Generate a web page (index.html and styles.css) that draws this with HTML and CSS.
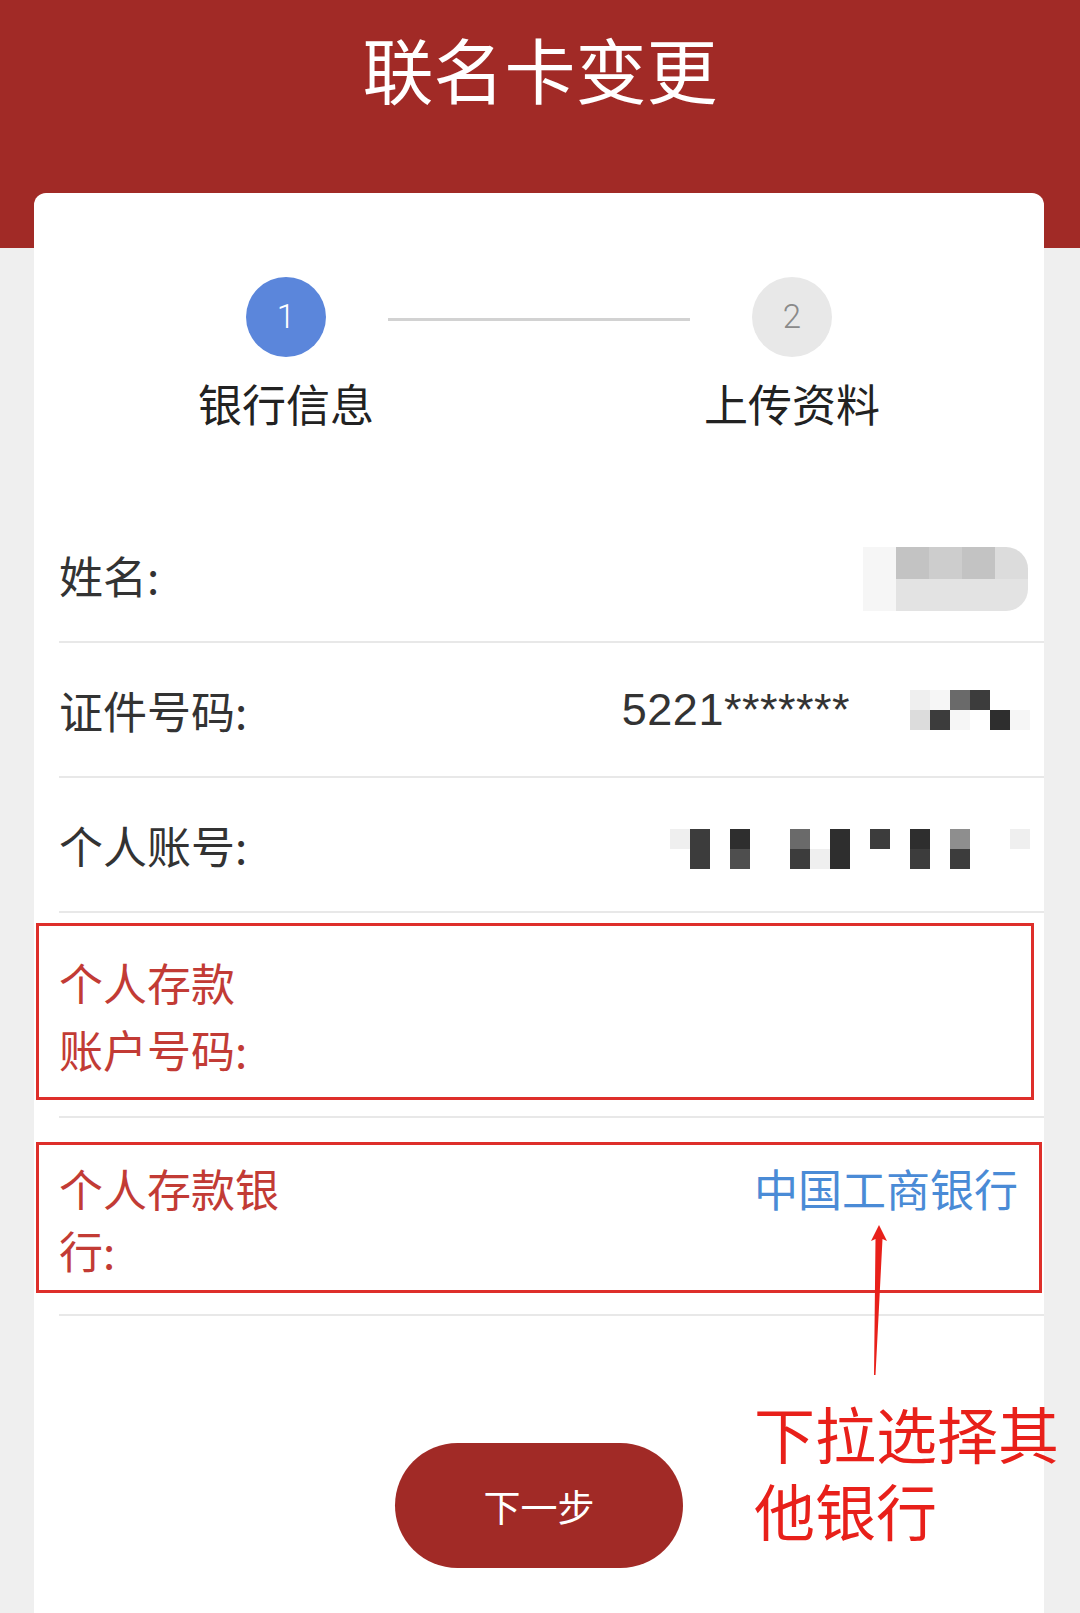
FILE: index.html
```html
<!DOCTYPE html>
<html lang="zh-CN">
<head>
    <meta charset="UTF-8">
    <meta name="viewport" content="width=device-width, initial-scale=1.0">
    <title>联名卡变更</title>
    <link rel="stylesheet" href="styles.css">
</head>
<body>
    <header class="topbar">
        <h1>联名卡变更</h1>
    </header>

    <main class="card">
        <div class="steps">
            <div class="step">
                <div class="step-dot active">1</div>
                <div class="step-name">银行信息</div>
            </div>
            <div class="step-line"></div>
            <div class="step">
                <div class="step-dot">2</div>
                <div class="step-name">上传资料</div>
            </div>
        </div>

        <div class="fields">
            <div class="field">
                <span class="field-label">姓名:</span>
                <div class="mosaic mosaic-name">
                    <i class="l6"></i><i class="l1"></i><i class="l2"></i><i class="l1"></i><i class="l3"></i>
                    <i class="l6"></i><i class="l4"></i><i class="l4"></i><i class="l4"></i><i class="l4"></i>
                </div>
            </div>

            <div class="field">
                <span class="field-label">证件号码:</span>
                <div class="field-value">
                    <span class="id-text">5221*******</span>
                    <div class="mosaic mosaic-id">
                        <i class="l5"></i><i class="l6"></i><i class="k4"></i><i class="k2"></i><i></i><i></i>
                        <i class="l3"></i><i class="k2"></i><i class="l6"></i><i></i><i class="k1"></i><i class="l6"></i>
                    </div>
                </div>
            </div>

            <div class="field">
                <span class="field-label">个人账号:</span>
                <div class="mosaic mosaic-acct">
                    <i class="l5"></i><i class="k2"></i><i></i><i class="k1"></i><i></i><i></i><i class="k4"></i><i></i><i class="k1"></i><i></i><i class="k2"></i><i></i><i class="k1"></i><i></i><i class="k5"></i><i></i><i></i><i class="l5"></i>
                    <i></i><i class="k2"></i><i></i><i class="k3"></i><i></i><i></i><i class="k2"></i><i class="l5"></i><i class="k1"></i><i></i><i></i><i></i><i class="k2"></i><i></i><i class="k2"></i><i></i><i></i><i></i>
                </div>
            </div>

            <div class="field field-tall field-deposit">
                <span class="field-label marked">个人存款<br>账户号码:</span>
                <div class="mark-box mark-deposit"></div>
            </div>

            <div class="field field-tall field-bank">
                <span class="field-label marked">个人存款银<br>行:</span>
                <span class="bank-value">中国工商银行</span>
                <div class="mark-box mark-bank"></div>
            </div>
        </div>

        <div class="actions">
            <button class="next-btn" type="button">下一步</button>
        </div>

        <svg class="note-arrow" width="30" height="160" viewBox="0 0 30 160">
            <polygon points="15,3 23,19 18.5,17 11.5,153 10,153 11.5,17 7,19" fill="#e8201a"/>
        </svg>
        <p class="note">下拉选择其<br>他银行</p>
    </main>
</body>
</html>
```

FILE: styles.css
```css
html, body {
    margin: 0;
    padding: 0;
    background-color: #efefef;
    font-family: "Liberation Sans", "Noto Sans CJK SC", sans-serif;
    color: #333333;
}

.topbar {
    height: 248px;
    background-color: #a12a26;
    padding-top: 17px;
    box-sizing: border-box;
}

.topbar h1 {
    margin: 0;
    font-size: 71px;
    font-weight: 400;
    line-height: 100px;
    color: #ffffff;
    text-align: center;
    font-family: "Noto Sans CJK SC", sans-serif;
}

.card {
    position: relative;
    margin: -55px 36px 0 34px;
    min-height: 1420px;
    background-color: #ffffff;
    border-radius: 12px 12px 0 0;
}

/* steps */

.steps {
    display: flex;
    height: 315px;
    padding: 84px 152px 0;
    box-sizing: border-box;
}

.step {
    width: 200px;
    display: flex;
    flex-direction: column;
    align-items: center;
}

.step-dot {
    width: 80px;
    height: 80px;
    border-radius: 50%;
    background-color: #e8e8e8;
    color: #8a8a8a;
    font-family: Roboto, "Liberation Sans", sans-serif;
    font-weight: 300;
    font-size: 33px;
    line-height: 80px;
    text-align: center;
}

.step-dot.active {
    background-color: #5b86db;
    color: #ffffff;
}

.step-name {
    margin-top: 18px;
    font-size: 44px;
    line-height: 57px;
    color: #222222;
    font-family: "Noto Sans CJK SC", sans-serif;
}

.step-line {
    flex: 1;
    height: 3px;
    margin: 41px 2px 0;
    background-color: #d2d2d2;
}

/* form rows */

.field {
    position: relative;
    display: flex;
    align-items: center;
    justify-content: space-between;
    height: 135px;
    margin-left: 25px;
    padding-right: 14px;
    border-bottom: 2px solid #e8e8e8;
    box-sizing: border-box;
}

.field-label {
    font-size: 44px;
    color: #333333;
    font-family: "Noto Sans CJK SC", sans-serif;
}

.field-tall {
    height: auto;
    align-items: flex-start;
}

.field-deposit {
    padding-top: 36px;
    padding-bottom: 33px;
}

.field-deposit .field-label {
    line-height: 67px;
}

.field-bank {
    padding-top: 39px;
    padding-bottom: 33px;
}

.field-bank .field-label {
    line-height: 62px;
}

.field-label.marked {
    color: #c23b35;
}

.bank-value {
    margin-right: 12px;
    font-size: 44px;
    line-height: 62px;
    color: #4a8bd6;
    font-family: "Noto Sans CJK SC", sans-serif;
}

.field-value {
    display: flex;
    align-items: center;
}

.id-text {
    font-size: 45px;
    letter-spacing: 0.5px;
    color: #333333;
}

/* blurred values */

.mosaic {
    display: grid;
}

.mosaic i {
    display: block;
}

.mosaic-name {
    grid-template-columns: repeat(5, 33px);
    grid-auto-rows: 32px;
    border-radius: 0 22px 22px 0;
    overflow: hidden;
    margin: 8px 2px 0 0;
}

.mosaic-id {
    grid-template-columns: repeat(6, 20px);
    grid-auto-rows: 20px;
    margin-left: 60px;
}

.mosaic-acct {
    grid-template-columns: repeat(18, 20px);
    grid-auto-rows: 20px;
    margin-top: 8px;
}

.k1 { background-color: #2e2e2e; }
.k2 { background-color: #3c3c3c; }
.k3 { background-color: #4e4e4e; }
.k4 { background-color: #6a6a6a; }
.k5 { background-color: #8e8e8e; }
.l1 { background-color: #c3c3c3; }
.l2 { background-color: #cdcdcd; }
.l3 { background-color: #dcdcdc; }
.l4 { background-color: #e3e3e3; }
.l5 { background-color: #efefef; }
.l6 { background-color: #f6f6f6; }

/* red annotation marks */

.mark-box {
    position: absolute;
    left: -23px;
    border: 3px solid #de2f2a;
    box-sizing: border-box;
}

.mark-deposit {
    top: 10px;
    width: 998px;
    height: 177px;
}

.mark-bank {
    top: 24px;
    width: 1006px;
    height: 151px;
}

.note-arrow {
    position: absolute;
    left: 830px;
    top: 1029px;
}

.note {
    position: absolute;
    left: 720px;
    top: 1201px;
    margin: 0;
    font-size: 61px;
    line-height: 77px;
    font-weight: 400;
    color: #e8201a;
    font-family: "Noto Sans CJK SC", sans-serif;
    white-space: nowrap;
}

/* button */

.actions {
    display: flex;
    justify-content: center;
    padding-top: 127px;
}

.next-btn {
    width: 288px;
    height: 125px;
    border: none;
    border-radius: 63px;
    background-color: #a12a26;
    color: #ffffff;
    font-size: 37px;
    font-family: "Noto Sans CJK SC", sans-serif;
    cursor: pointer;
}
```
